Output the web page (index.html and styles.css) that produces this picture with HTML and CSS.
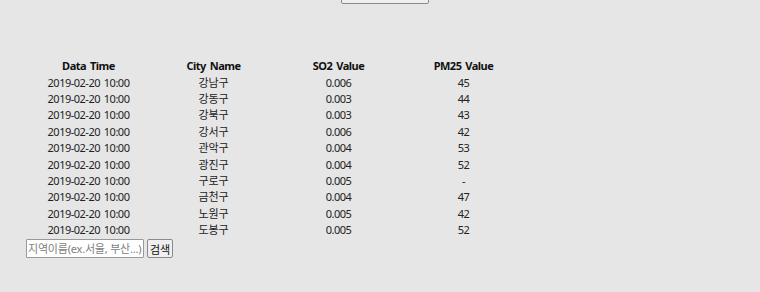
FILE: index.html
```html
<!DOCTYPE html>
<html lang="ko">
<head>
<meta charset="utf-8">
<link rel="stylesheet" href="styles.css">
</head>
<body>
<div class="top">
  <button class="top-btn">대기오염정보 조회</button>
</div>
<table class="data">
  <thead>
    <tr><th>Data Time</th><th>City Name</th><th>SO2 Value</th><th>PM25 Value</th></tr>
  </thead>
  <tbody>
    <tr><td>2019-02-20 10:00</td><td class="ko">강남구</td><td>0.006</td><td>45</td></tr>
    <tr><td>2019-02-20 10:00</td><td class="ko">강동구</td><td>0.003</td><td>44</td></tr>
    <tr><td>2019-02-20 10:00</td><td class="ko">강북구</td><td>0.003</td><td>43</td></tr>
    <tr><td>2019-02-20 10:00</td><td class="ko">강서구</td><td>0.006</td><td>42</td></tr>
    <tr><td>2019-02-20 10:00</td><td class="ko">관악구</td><td>0.004</td><td>53</td></tr>
    <tr><td>2019-02-20 10:00</td><td class="ko">광진구</td><td>0.004</td><td>52</td></tr>
    <tr><td>2019-02-20 10:00</td><td class="ko">구로구</td><td>0.005</td><td>-</td></tr>
    <tr><td>2019-02-20 10:00</td><td class="ko">금천구</td><td>0.004</td><td>47</td></tr>
    <tr><td>2019-02-20 10:00</td><td class="ko">노원구</td><td>0.005</td><td>42</td></tr>
    <tr><td>2019-02-20 10:00</td><td class="ko">도봉구</td><td>0.005</td><td>52</td></tr>
  </tbody>
</table>
<div class="search">
  <input class="search-input" type="text" placeholder="지역이름(ex.서울, 부산...)">
  <button class="search-btn">검색</button>
</div>
</body>
</html>
```
FILE: styles.css
```css
html, body {
  margin: 0;
  padding: 0;
  background: #e6e6e6;
}
body {
  font-family: "Noto Sans", "Noto Sans CJK KR", sans-serif;
  font-size: 11px;
  color: #222;
  padding: 0 0 0 26px;
  overflow: hidden;
}
.top {
  height: 4px;
  overflow: hidden;
  display: flex;
  align-items: flex-end;
  padding-left: 315px;
}
.top-btn {
  flex: none;
  width: 88px;
  height: 20px;
  font: 11px "Noto Sans", "Noto Sans CJK KR", sans-serif;
  background: #efefef;
  border: 1px solid #8a8a8a;
  border-radius: 2px;
  padding: 0;
}
.data {
  border-collapse: collapse;
  margin-top: 54px;
  letter-spacing: -0.5px;
  word-spacing: 1.5px;
}
.data th, .data td {
  width: 125px;
  padding: 0;
  height: 16.4px;
  line-height: 16px;
  text-align: center;
  white-space: nowrap;
}
.data th {
  font-weight: bold;
  color: #111;
}
.data td.ko {
  letter-spacing: -0.2px;
}
.search {
  display: flex;
  gap: 3px;
  align-items: center;
  margin-top: 1px;
}
.search-input {
  width: 118px;
  height: 19px;
  box-sizing: border-box;
  border: 1px solid #999;
  border-radius: 1px;
  background: #fff;
  padding: 0 1px;
  letter-spacing: -0.2px;
  font: 11px "Noto Sans", "Noto Sans CJK KR", sans-serif;
}
.search-input::placeholder {
  color: #808080;
}
.search-btn {
  height: 19px;
  box-sizing: border-box;
  padding: 0 2px;
  font: 11px "Noto Sans", "Noto Sans CJK KR", sans-serif;
  background: #efefef;
  border: 1px solid #8a8a8a;
  border-radius: 2px;
  color: #111;
}
```
